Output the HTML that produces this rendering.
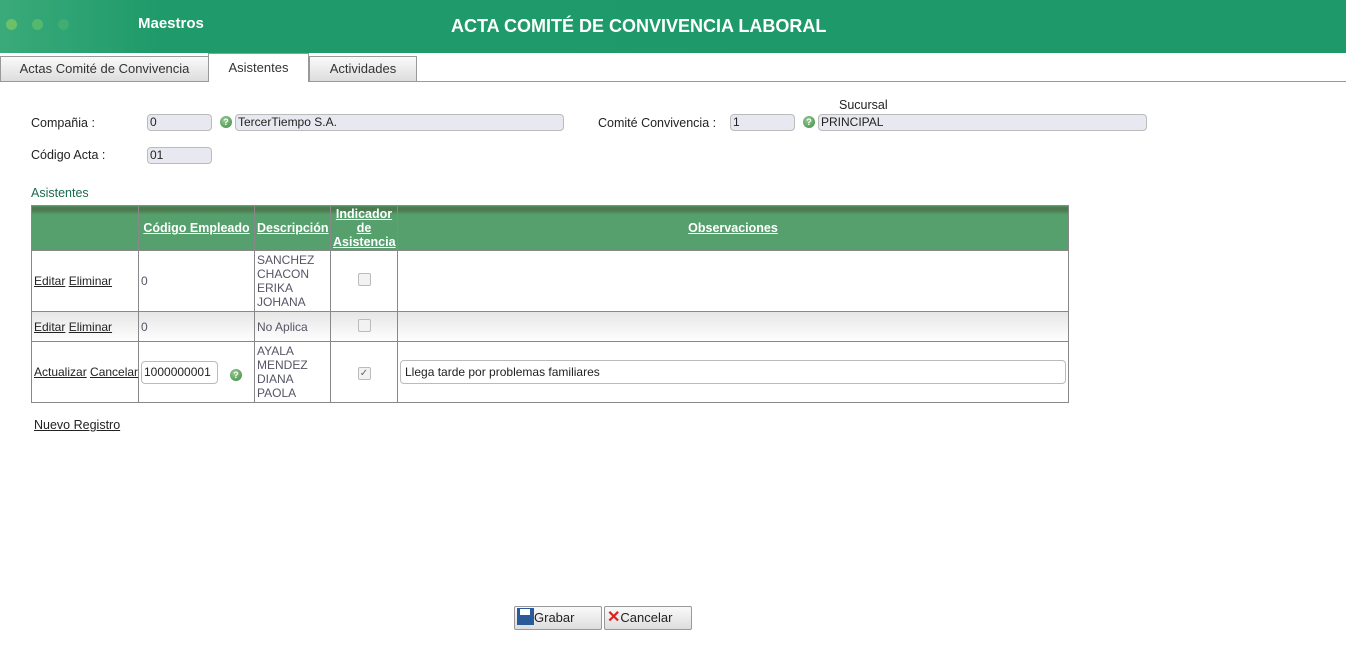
<!DOCTYPE html>
<html><head><meta charset="utf-8">
<style>
*{box-sizing:border-box}
body{margin:0;width:1346px;height:657px;background:#fff;font-family:"Liberation Sans",sans-serif;font-size:12.5px;color:#222;position:relative;overflow:hidden}
.hdr{position:absolute;left:0;top:0;width:1346px;height:53px;background:linear-gradient(90deg,#3aaa7a 0,#1f9a6a 160px,#1e9a6a 100%)}
.dot{position:absolute;top:19px;width:11px;height:11px;border-radius:50%}
.hdr .m{position:absolute;left:138px;top:15px;color:#fff;font-weight:bold;font-size:15px}
.hdr .t{position:absolute;left:451px;top:16px;color:#fff;font-weight:bold;font-size:18px}
.tab{position:absolute;top:56px;height:25px;border:1px solid #999;border-bottom:none;background:linear-gradient(#fafafa,#ddd);text-align:center;line-height:23px;font-size:13px;color:#333}
.line{position:absolute;left:0;top:81px;width:1346px;height:1px;background:#999}
.lbl{position:absolute;font-size:12.5px;color:#222}
.inp{position:absolute;height:17px;background:#e8e8f0;border:1px solid #bbb;border-radius:4px;font-size:12px;line-height:15px;padding-left:2px}
.q{position:absolute;width:12px;height:12px;border-radius:50%;background:radial-gradient(circle at 40% 35%,#9c9,#3a8a3a);color:#fff;font-size:9px;font-weight:bold;text-align:center;line-height:12px}
table{position:absolute;left:31px;top:205px;border-collapse:collapse;width:1038px;table-layout:fixed}
td,th{border:1px solid #888;padding:0 2px;font-size:12px}
th{background:linear-gradient(#4e7a50 0,#4e7a50 4px,#55a06c 8px,#55a06c);color:#fff;height:45px;text-decoration:underline;font-weight:bold;line-height:14px;font-size:12.5px}
a{color:#222;text-decoration:underline}
.g{color:#556}
.cb{display:inline-block;width:13px;height:13px;border:1px solid #bbb;background:#f2f2f2;border-radius:2px}
.btn{position:absolute;top:606px;height:24px;border:1px solid #999;border-radius:2px;background:linear-gradient(#fafafa,#ddd);font-size:13px;line-height:22px;padding-left:2px;white-space:nowrap}
</style></head><body>
<div class="hdr">
<div class="dot" style="left:6px;background:#6cc06a"></div>
<div class="dot" style="left:32px;background:#55b870"></div>
<div class="dot" style="left:58px;background:#3fae70"></div>
<div class="m">Maestros</div>
<div class="t">ACTA COMITÉ DE CONVIVENCIA LABORAL</div>
</div>
<div class="tab" style="left:0;width:209px">Actas Comité de Convivencia</div>
<div class="tab" style="left:208px;width:101px;top:53px;height:29px;background:#fff;line-height:28px;z-index:2">Asistentes</div>
<div class="tab" style="left:309px;width:108px">Actividades</div>
<div class="line"></div>

<div class="lbl" style="left:31px;top:116px">Compañia :</div>
<div class="inp" style="left:147px;top:114px;width:65px">0</div>
<div class="q" style="left:220px;top:116px">?</div>
<div class="inp" style="left:235px;top:114px;width:329px">TercerTiempo S.A.</div>
<div class="lbl" style="left:839px;top:98px">Sucursal</div>
<div class="lbl" style="left:598px;top:116px">Comité Convivencia :</div>
<div class="inp" style="left:730px;top:114px;width:65px">1</div>
<div class="q" style="left:803px;top:116px">?</div>
<div class="inp" style="left:818px;top:114px;width:329px">PRINCIPAL</div>
<div class="lbl" style="left:31px;top:148px">Código Acta :</div>
<div class="inp" style="left:147px;top:147px;width:65px">01</div>
<div class="lbl" style="left:31px;top:186px;color:#1a6a4a">Asistentes</div>

<table>
<colgroup><col style="width:107px"><col style="width:116px"><col style="width:76px"><col style="width:67px"><col></colgroup>
<tr><th></th><th style="white-space:nowrap">Código Empleado</th><th>Descripción</th><th>Indicador de Asistencia</th><th>Observaciones</th></tr>
<tr style="height:61px"><td style="white-space:nowrap"><a>Editar</a> <a>Eliminar</a></td><td class="g">0</td><td class="g" style="line-height:14px">SANCHEZ<br>CHACON<br>ERIKA<br>JOHANA</td><td style="text-align:center"><span class="cb"></span></td><td></td></tr>
<tr style="height:30px;background:linear-gradient(#e6e6e6,#fff)"><td style="white-space:nowrap"><a>Editar</a> <a>Eliminar</a></td><td class="g">0</td><td class="g">No Aplica</td><td style="text-align:center"><span class="cb"></span></td><td></td></tr>
<tr style="height:61px"><td style="white-space:nowrap"><a>Actualizar</a> <a>Cancelar</a></td><td style="white-space:nowrap"><span style="display:inline-block;width:77px;height:23px;border:1px solid #bbb;border-radius:4px;line-height:21px;padding-left:2px">1000000001</span><span class="q" style="position:relative;display:inline-block;left:12px;top:2px">?</span></td><td class="g" style="line-height:14px">AYALA<br>MENDEZ<br>DIANA<br>PAOLA</td><td style="text-align:center"><span class="cb" style="font-size:10px;line-height:11px;color:#666">✓</span></td><td><div style="height:24px;border:1px solid #bbb;border-radius:4px;line-height:22px;padding-left:4px">Llega tarde por problemas familiares</div></td></tr>
</table>
<div class="lbl" style="left:34px;top:418px"><a>Nuevo Registro</a></div>

<div class="btn" style="left:514px;width:88px"><span style="display:inline-block;width:17px;height:17px;background:#2a5a9a;vertical-align:-3px;position:relative"><span style="position:absolute;left:3px;top:1px;width:10px;height:6px;background:#fff"></span></span>Grabar</div>
<div class="btn" style="left:604px;width:88px"><span style="color:#e02020;font-weight:bold;font-size:16px">✕</span>Cancelar</div>
</body></html>
